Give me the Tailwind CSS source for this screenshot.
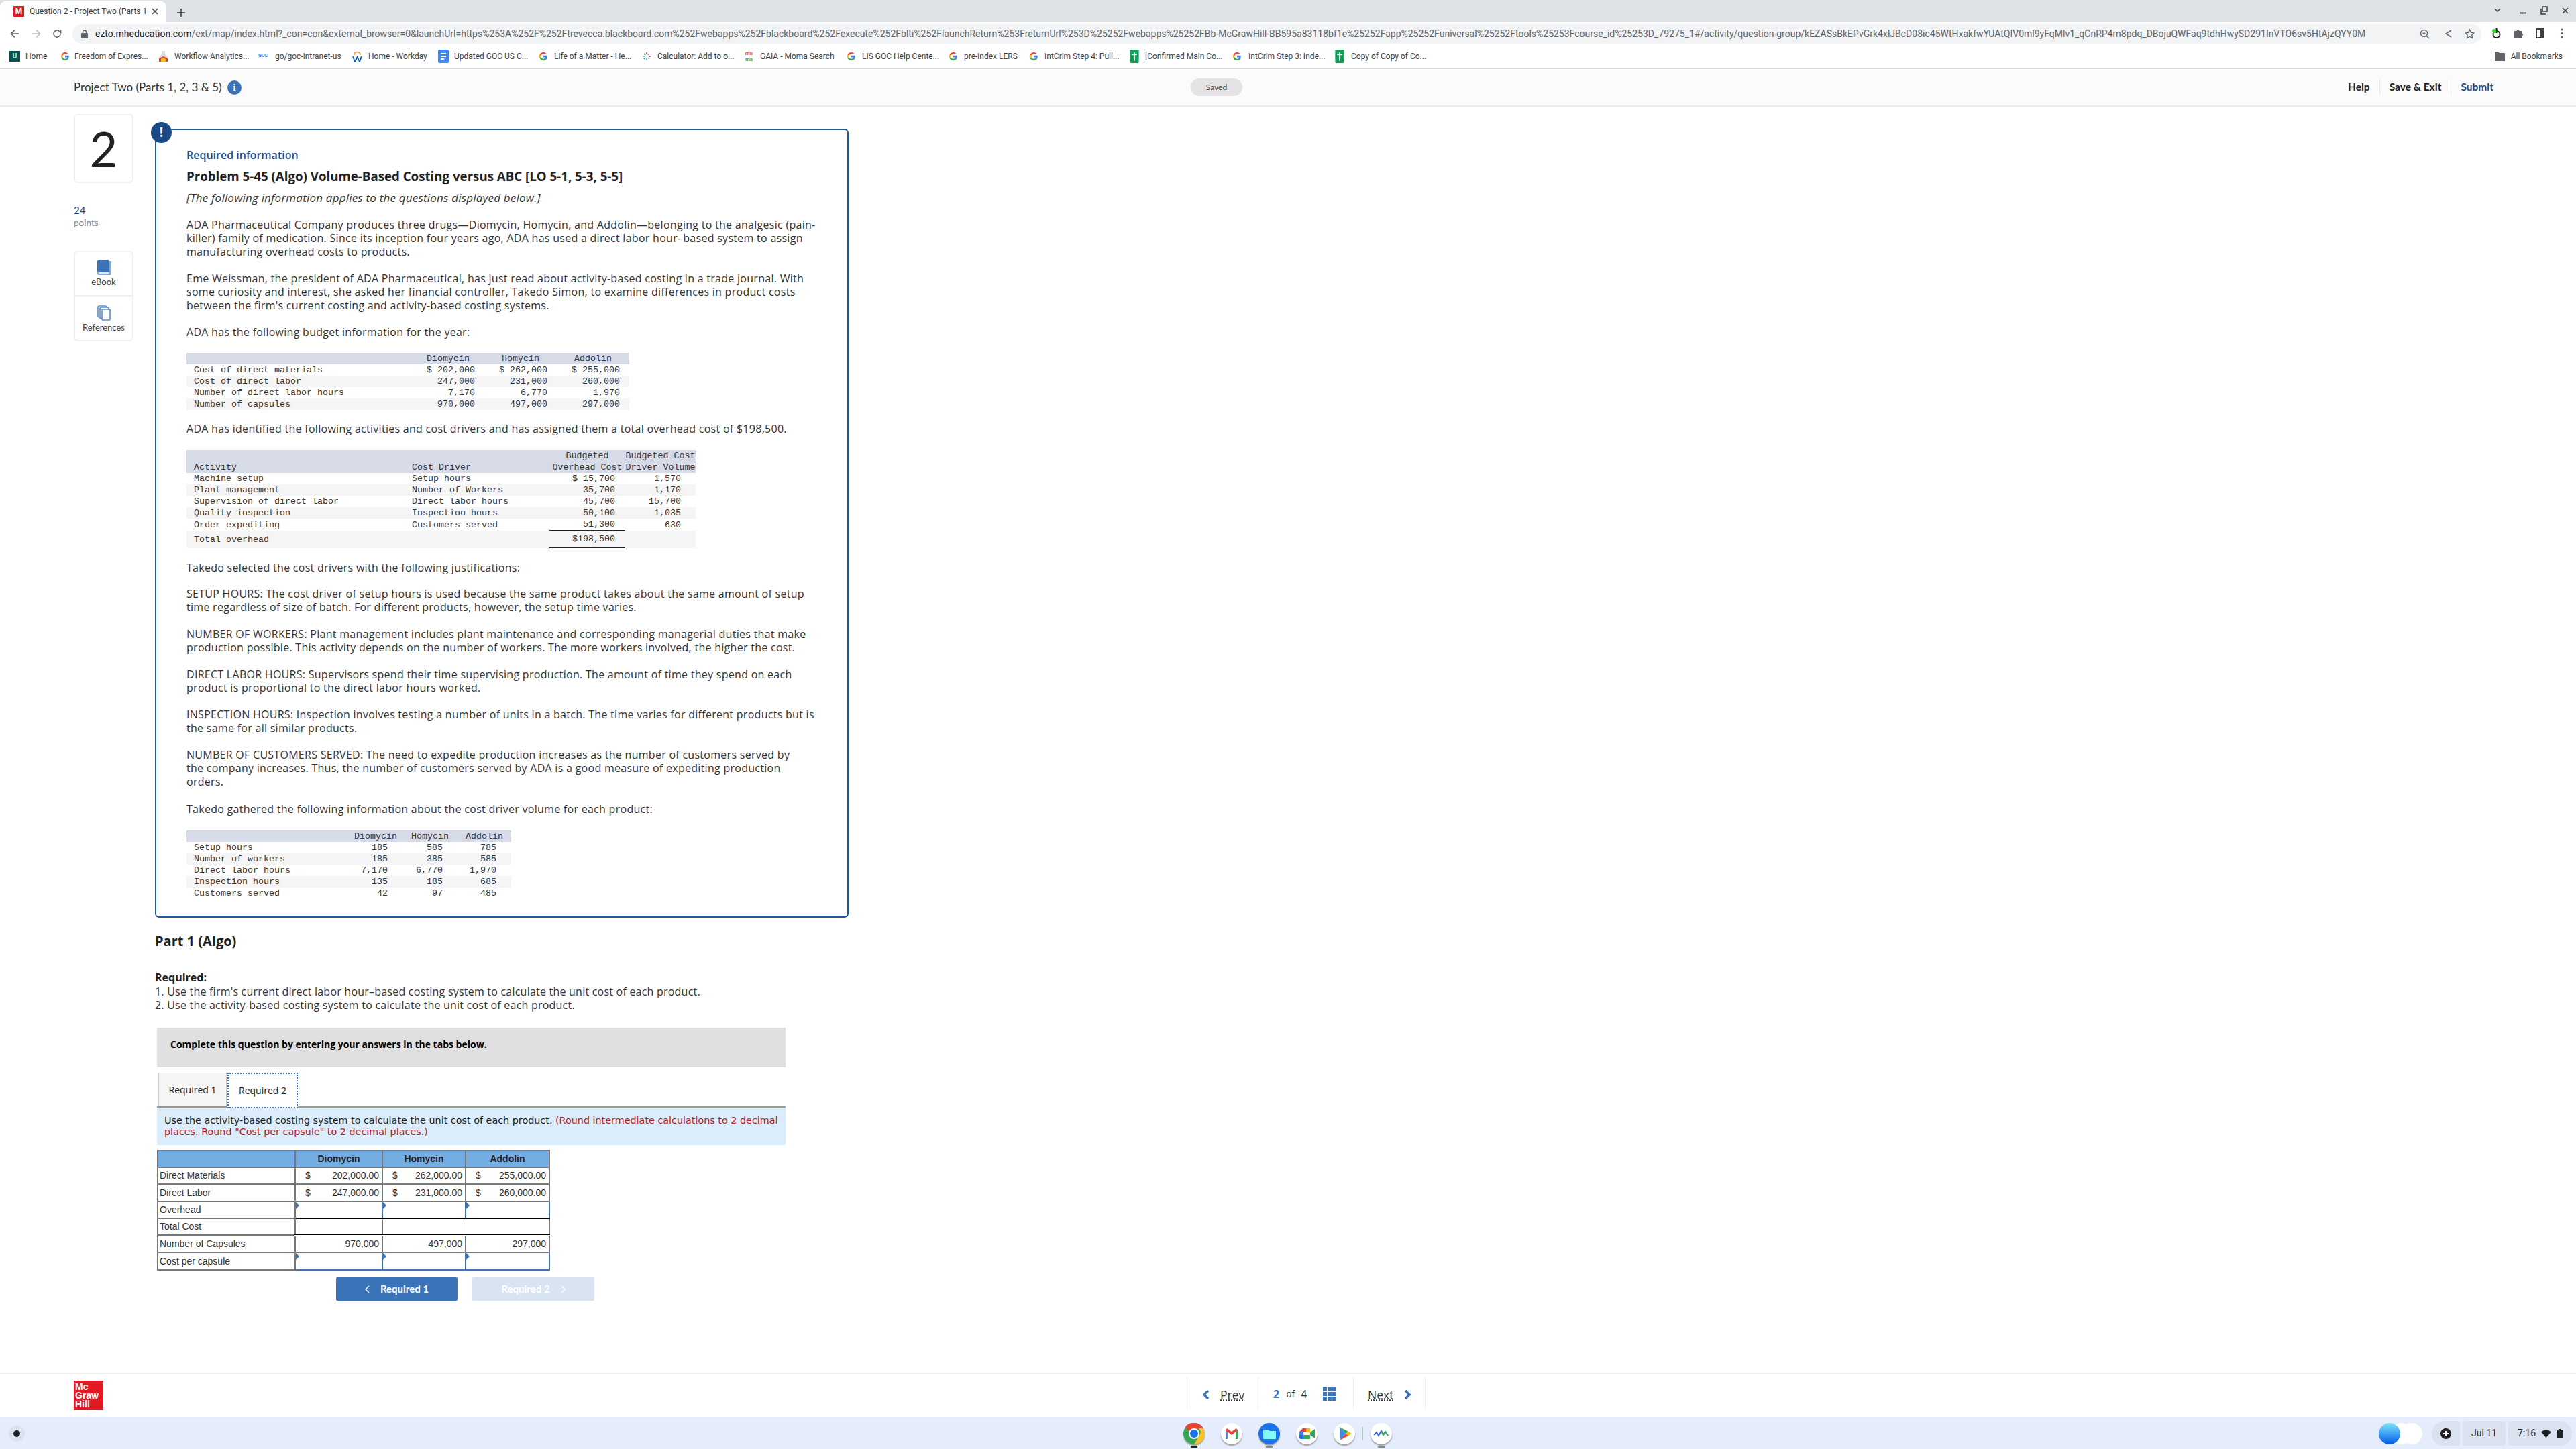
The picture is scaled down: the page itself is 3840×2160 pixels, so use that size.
<!DOCTYPE html>
<html lang="en">
<head>
<meta charset="UTF-8">
<title>Question 2 - Project Two (Parts 1, 2, 3 &amp; 5)</title>
<script src="https://cdn.jsdelivr.net/npm/@tailwindcss/browser@4"></script>
</head>
<body class="bg-white font-['Roboto',sans-serif] text-[#333]">
<svg class="hidden">
  <symbol id="g" viewBox="0 0 16 16">
    <path d="M14.6 8.2c0-.5 0-1-.1-1.5H8v2.9h3.7c-.2.9-.7 1.7-1.4 2.2l2.3 1.8c1.3-1.3 2-3.1 2-5.4z" fill="#4285f4"/>
    <path d="M8 15c1.9 0 3.5-.6 4.6-1.7l-2.3-1.8c-.6.4-1.4.7-2.3.7-1.8 0-3.3-1.2-3.9-2.9L1.7 11.2C2.9 13.5 5.3 15 8 15z" fill="#34a853"/>
    <path d="M4.1 9.3C3.8 8.5 3.8 7.500 4.100 6.700L1.700 4.800c-1 1.900-1 4.500 0 6.400z" fill="#fbbc05"/>
    <path d="M8 3.800c1 0 1.900.4 2.600 1l2-2C11.400 1.700 9.800 1 8 1 5.300 1 2.900 2.500 1.700 4.800l2.400 1.900C4.700 5 6.200 3.800 8 3.800z" fill="#ea4335"/>
  </symbol>
  <symbol id="sheet" viewBox="0 0 16 24">
    <rect width="16" height="24" rx="2" fill="#0f9d58"/>
    <path d="M7 5h2v15H7zM3.500 8h9v2h-9z" fill="#fff"/>
  </symbol>
</svg>

<div class="w-[3840px] h-[2160px] flex flex-col overflow-hidden">

  <!-- tab strip -->
  <div class="h-[33px] bg-[#dee1e6] flex items-end relative">
    <div class="w-[248px] h-[32px] bg-white rounded-t-[10px] flex items-center pl-[20px]">
      <span class="w-[16px] h-[16px] bg-[#e21a23] text-white text-[13px] leading-[16px] font-bold text-center font-['Liberation_Sans',sans-serif]">M</span>
      <span class="ml-[8px] w-[176px] whitespace-nowrap text-[12px] text-[#3c4043]">Question 2 - Project Two (Parts 1</span>
      <svg class="ml-[6px]" width="10" height="10" viewBox="0 0 10 10"><path d="M1 1l8 8M9 1l-8 8" stroke="#3c4043" stroke-width="1.500"/></svg>
    </div>
    <svg class="ml-[16px] mb-[8px]" width="12" height="12" viewBox="0 0 12 12"><path d="M6 0v12M0 6h12" stroke="#3c4043" stroke-width="1.600"/></svg>
    <div class="ml-auto mr-[11px] mb-[11px] flex items-center gap-[21px]">
      <svg width="10" height="7" viewBox="0 0 10 7"><path d="M1 1l4 4 4-4" fill="none" stroke="#3c4043" stroke-width="1.500"/></svg>
      <svg class="ml-[7px]" width="10" height="10" viewBox="0 0 10 10"><path d="M0 8.500h10" stroke="#3c4043" stroke-width="2"/></svg>
      <svg width="11" height="13" viewBox="0 0 11 13"><path d="M3 1h7v7H3zM1 4v8h7" fill="none" stroke="#3c4043" stroke-width="1.500"/></svg>
      <svg width="10" height="10" viewBox="0 0 10 10"><path d="M1 1l8 8M9 1l-8 8" stroke="#3c4043" stroke-width="1.500"/></svg>
    </div>
  </div>

  <!-- address bar -->
  <div class="h-[33px] bg-white flex items-center relative">
    <svg class="ml-[15px]" width="14" height="14" viewBox="0 0 14 14"><path d="M13 7H2M7 1.500L1.500 7 7 12.500" fill="none" stroke="#5f6368" stroke-width="1.700"/></svg>
    <svg class="ml-[18px]" width="14" height="14" viewBox="0 0 14 14"><path d="M1 7h11M7 1.500L12.500 7 7 12.500" fill="none" stroke="#bdc1c6" stroke-width="1.700"/></svg>
    <svg class="ml-[17px]" width="14" height="14" viewBox="0 0 14 14"><path d="M12 7a5 5 0 1 1-1.500-3.500L12.500 5.500V1.500" fill="none" stroke="#5f6368" stroke-width="1.600"/></svg>
    <div class="ml-[16px] w-[3591px] shrink-0 h-[29px] mt-[1px] bg-[#f1f3f4] rounded-full flex items-center pl-[13px]">
      <svg width="10" height="13" viewBox="0 0 10 13"><path d="M2.500 5V3.500a2.500 2.500 0 0 1 5 0V5" fill="none" stroke="#5f6368" stroke-width="1.300"/><rect y="5" width="10" height="8" rx="1" fill="#5f6368"/></svg>
      <span class="ml-[11px] w-[3385px] whitespace-nowrap text-[14px] text-[#5f6368]"><span class="text-[#202124]">ezto.mheducation.com</span>/ext/map/index.html?_con=con&amp;external_browser=0&amp;launchUrl=https%253A%252F%252Ftrevecca.blackboard.com%252Fwebapps%252Fblackboard%252Fexecute%252Fblti%252FlaunchReturn%253FreturnUrl%253D%25252Fwebapps%25252FBb-McGrawHill-BB595a83118bf1e%25252Fapp%25252Funiversal%25252Ftools%25253Fcourse_id%25253D_79275_1#/activity/question-group/kEZASsBkEPvGrk4xlJBcD08ic45WtHxakfwYUAtQIV0ml9yFqMlv1_qCnRP4m8pdq_DBojuQWFaq9tdhHwySD291InVTO6sv5HtAjzQYY0M</span>
      <svg class="ml-[80px]" width="15" height="15" viewBox="0 0 15 15"><circle cx="6.500" cy="6.500" r="5" fill="none" stroke="#5f6368" stroke-width="1.300"/><path d="M10 10l4 4M4.500 6.500h4M6.500 4.500v4" stroke="#5f6368" stroke-width="1.300"/></svg>
      <svg class="ml-[21px]" width="14" height="14" viewBox="0 0 14 14"><path d="M11 2L3 7l8 5" fill="none" stroke="#5f6368" stroke-width="1.500"/></svg>
      <svg class="ml-[17px]" width="15" height="15" viewBox="0 0 15 15"><path d="M7.500 1l2 4.300 4.500.6-3.300 3.100.9 4.600-4.100-2.300-4.100 2.300.9-4.600L1 5.900l4.500-.6z" fill="none" stroke="#5f6368" stroke-width="1.300"/></svg>
    </div>
    <svg class="ml-[16px]" width="13" height="17" viewBox="0 0 13 17"><circle cx="6.500" cy="10" r="5" fill="none" stroke="#202124" stroke-width="2"/><path d="M6.500 1v7" stroke="#202124" stroke-width="2"/><circle cx="3" cy="5" r="3" fill="#1fe01f"/></svg>
    <svg class="ml-[19px]" width="14" height="15" viewBox="0 0 14 15"><path d="M1 4h3.500a2 2 0 0 1 4 0H12v3.500a2 2 0 0 1 0 4V14H1z" fill="#5f6368"/></svg>
    <svg class="ml-[19px]" width="12" height="15" viewBox="0 0 12 15"><path d="M1 1h10v13H1z" fill="none" stroke="#3c4043" stroke-width="2"/><path d="M7 1h4v13H7z" fill="#3c4043"/></svg>
    <svg class="ml-[25px]" width="4" height="15" viewBox="0 0 4 15"><circle cx="2" cy="2" r="1.500" fill="#5f6368"/><circle cx="2" cy="7.500" r="1.500" fill="#5f6368"/><circle cx="2" cy="13" r="1.500" fill="#5f6368"/></svg>
  </div>

  <!-- bookmarks bar -->
  <div class="h-[37px] bg-white border-b-2 border-[#dadce0] flex items-center text-[12px] text-[#3c4043] whitespace-nowrap pl-[14px]">
    <div class="flex items-center"><span class="w-[16px] h-[16px] bg-[#0b5152] text-[#9fe] text-[10px] leading-[16px] text-center font-bold">U</span><span class="ml-[8px] w-[32px]">Home</span></div>
    <div class="ml-[20px] flex items-center"><svg width="14" height="16"><use href="#g"/></svg><span class="ml-[7px] w-[108px]">Freedom of Expres...</span></div>
    <div class="ml-[18px] flex items-center"><svg width="13" height="16" viewBox="0 0 13 16"><path d="M4 0h5v5l4 4v7H0V9l4-4z" fill="#dadce0"/><path d="M0 11l6.500-3 6.500 3v5H0z" fill="#ea4335"/><path d="M3 12l3.500-2 3.500 2v4H3z" fill="#fbbc05"/></svg><span class="ml-[10px] w-[110px]">Workflow Analytics...</span></div>
    <div class="ml-[15px] flex items-center"><span class="w-[18px] text-[7px] font-bold text-[#4285f4]">GOC</span><span class="ml-[7px] w-[100px]">go/goc-intranet-us</span></div>
    <div class="ml-[15px] flex items-center"><svg width="15" height="18" viewBox="0 0 15 18"><path d="M3 7a4.500 4.500 0 0 1 9 0" fill="none" stroke="#f6861f" stroke-width="1.600"/><path d="M1 9l3 8 3.500-7 3.500 7 3-8" fill="none" stroke="#0b5fb0" stroke-width="1.800"/></svg><span class="ml-[9px] w-[88px]">Home - Workday</span></div>
    <div class="ml-[16px] flex items-center"><svg width="16" height="20" viewBox="0 0 16 20"><rect width="16" height="20" rx="2" fill="#4285f4"/><path d="M4 6h8M4 10h8M4 14h5" stroke="#fff" stroke-width="1.800"/></svg><span class="ml-[8px] w-[109px]">Updated GOC US C...</span></div>
    <div class="ml-[17px] flex items-center"><svg width="14" height="16"><use href="#g"/></svg><span class="ml-[9px] w-[115px]">Life of a Matter - He...</span></div>
    <div class="ml-[16px] flex items-center"><svg width="14" height="14" viewBox="0 0 14 14"><path d="M7 1v3M7 10v3M1 7h3M10 7h3M3 3l2 2M9 9l2 2M11 3L9 5M5 9l-2 2" stroke="#5fa3d8" stroke-width="1.500"/><path d="M7 1v3M10 7h3" stroke="#ea4335" stroke-width="1.500"/><path d="M3 3l2 2M5 9l-2 2" stroke="#34a853" stroke-width="1.500"/></svg><span class="ml-[9px] w-[112px]">Calculator: Add to o...</span></div>
    <div class="ml-[16px] flex items-center"><span class="w-[17px] text-[8px] leading-[9px] font-bold text-center"><span class="text-[#e0524d]">mo</span><br><span class="text-[#34a853]">ma</span></span><span class="ml-[8px] w-[112px]">GAIA - Moma Search</span></div>
    <div class="ml-[17px] flex items-center"><svg width="14" height="16"><use href="#g"/></svg><span class="ml-[9px] w-[112px]">LIS GOC Help Cente...</span></div>
    <div class="ml-[17px] flex items-center"><svg width="14" height="16"><use href="#g"/></svg><span class="ml-[9px] w-[80px]">pre-index LERS</span></div>
    <div class="ml-[17px] flex items-center"><svg width="14" height="16"><use href="#g"/></svg><span class="ml-[9px] w-[110px]">IntCrim Step 4: Pull...</span></div>
    <div class="ml-[16px] flex items-center"><svg width="16" height="20"><use href="#sheet"/></svg><span class="ml-[8px] w-[114px]">[Confirmed Main Co...</span></div>
    <div class="ml-[16px] flex items-center"><svg width="14" height="16"><use href="#g"/></svg><span class="ml-[10px] w-[113px]">IntCrim Step 3: Inde...</span></div>
    <div class="ml-[15px] flex items-center"><svg width="16" height="20"><use href="#sheet"/></svg><span class="ml-[9px] w-[110px]">Copy of Copy of Co...</span></div>
    <div class="ml-auto mr-[20px] flex items-center"><svg width="15" height="16" viewBox="0 0 15 16"><path d="M0 2a1 1 0 0 1 1-1h4l2 2h7a1 1 0 0 1 1 1v11H0z" fill="#5f6368"/></svg><span class="ml-[9px]">All Bookmarks</span></div>
  </div>

  <!-- assignment header -->
  <div class="h-[56px] bg-[#fbfbfb] border-b-2 border-[#eeeeee] flex items-center relative font-['Lato',sans-serif]">
    <span class="ml-[110px] text-[17px] text-[#333] w-[224px] whitespace-nowrap">Project Two (Parts 1, 2, 3 &amp; 5)</span>
    <span class="ml-[5px] w-[21px] h-[21px] rounded-full bg-[#3b73b9] text-white text-[14px] leading-[21px] text-center font-bold font-['Liberation_Serif',serif]">i</span>
    <span class="ml-[1415px] w-[77px] h-[26px] rounded-full bg-[#e4e2e5] text-[12px] leading-[26px] text-center text-[#444]">Saved</span>
    <div class="ml-auto mr-[123px] flex items-center text-[15.5px] font-bold text-[#222]">
      <span class="pr-[14px] border-r border-[#e8e8e8]">Help</span>
      <span class="px-[14px] border-r border-[#e8e8e8]">Save &amp; Exit</span>
      <span class="pl-[14px] text-[#1c4d8c]">Submit</span>
    </div>
  </div>

  <!-- main -->
  <div class="flex-1 flex pl-[110px] pt-[11px] font-['Open_Sans',sans-serif]">
    <div class="w-[89px] font-['Lato',sans-serif]">
      <div class="h-[103px] border-2 border-[#f0f0f0] rounded-[6px] text-[72px] leading-[99px] text-center text-[#222]">2</div>
      <div class="mt-[30px] text-[15px] leading-[20px] text-[#1c4d8c]">24</div>
      <div class="text-[13.5px] leading-[18px] text-[#888]">points</div>
      <div class="mt-[33px] h-[135px] border-2 border-[#f0f0f0] rounded-[6px] flex flex-col items-center text-[13px] text-[#444]">
        <div class="h-[66px] w-full border-b-2 border-[#f0f0f0] flex flex-col items-center pt-[11px]">
          <svg width="20" height="23" viewBox="0 0 20 23"><path d="M18 2h2v21H3a3 3 0 0 1-3-3z" fill="#80a8dc"/><path d="M0 3a3 3 0 0 1 3-3h14v18H3a3 3 0 0 0-3 2z" fill="#3b73b9"/><path d="M3 20h15" stroke="#fff" stroke-width="1.500"/></svg>
          <span class="leading-[18px] mt-[1px]">eBook</span>
        </div>
        <div class="flex flex-col items-center pt-[13px]">
          <svg width="20" height="23" viewBox="0 0 20 23"><rect x="1" y="1" width="13" height="17" rx="2" fill="#fff" stroke="#5c8fcf" stroke-width="1.600"/><rect x="4" y="3" width="13" height="17" rx="2" fill="#fff" stroke="#5c8fcf" stroke-width="1.600"/><rect x="7" y="6" width="12" height="16" rx="1" fill="#fff" stroke="#5c8fcf" stroke-width="1.600"/></svg>
          <span class="leading-[18px] mt-[1px]">References</span>
        </div>
      </div>
    </div>

    <div class="ml-[32px] w-[1034px] pt-[22px]">
      <!-- required information box -->
      <div class="relative h-[1176px] border-2 border-[#1d5a9b] rounded-[6px] pl-[45px] pt-[27px] text-[16px] tracking-[0.28px] leading-[20px] text-[#333]">
        <span class="absolute left-[-8px] top-[-12px] w-[31px] h-[31px] rounded-full bg-[#1a4a86] text-white text-[19px] leading-[31px] text-center font-bold">!</span>
        <div class="font-semibold tracking-normal text-[#1c4d8c]">Required information</div>
        <h1 class="mt-[12px] text-[18.7px] tracking-normal font-bold text-[#222]">Problem 5-45 (Algo) Volume-Based Costing versus ABC [LO 5-1, 5-3, 5-5]</h1>
        <p class="mt-[12px] italic text-[17px] tracking-[0.2px]">[The following information applies to the questions displayed below.]</p>
        <p class="mt-[20px] w-[985px]">ADA Pharmaceutical Company produces three drugs—Diomycin, Homycin, and Addolin—belonging to the analgesic (pain-<br>killer) family of medication. Since its inception four years ago, ADA has used a direct labor hour–based system to assign<br>manufacturing overhead costs to products.</p>
        <p class="mt-[20px] w-[985px]">Eme Weissman, the president of ADA Pharmaceutical, has just read about activity-based costing in a trade journal. With<br>some curiosity and interest, she asked her financial controller, Takedo Simon, to examine differences in product costs<br>between the firm's current costing and activity-based costing systems.</p>
        <p class="mt-[20px]">ADA has the following budget information for the year:</p>

        <table class="mt-[21px] w-[660px] table-fixed border-collapse font-['Liberation_Mono',monospace] text-[13.33px] tracking-normal leading-[17px] whitespace-pre">
          <colgroup><col class="w-[336px]"><col class="w-[108px]"><col class="w-[108px]"><col class="w-[108px]"></colgroup>
          <tr class="bg-[#d7dbe7]"><td></td><td class="text-center">Diomycin</td><td class="text-center">Homycin</td><td class="text-center">Addolin</td></tr>
          <tr><td class="pl-[11px]">Cost of direct materials</td><td class="text-right pr-[14px]">$ 202,000</td><td class="text-right pr-[14px]">$ 262,000</td><td class="text-right pr-[14px]">$ 255,000</td></tr>
          <tr class="bg-[#f5f5f5]"><td class="pl-[11px]">Cost of direct labor</td><td class="text-right pr-[14px]">247,000</td><td class="text-right pr-[14px]">231,000</td><td class="text-right pr-[14px]">260,000</td></tr>
          <tr><td class="pl-[11px]">Number of direct labor hours</td><td class="text-right pr-[14px]">7,170</td><td class="text-right pr-[14px]">6,770</td><td class="text-right pr-[14px]">1,970</td></tr>
          <tr class="bg-[#f5f5f5]"><td class="pl-[11px]">Number of capsules</td><td class="text-right pr-[14px]">970,000</td><td class="text-right pr-[14px]">497,000</td><td class="text-right pr-[14px]">297,000</td></tr>
        </table>

        <p class="mt-[18px]">ADA has identified the following activities and cost drivers and has assigned them a total overhead cost of $198,500.</p>

        <table class="mt-[22px] w-[759px] table-fixed border-collapse font-['Liberation_Mono',monospace] text-[13.33px] tracking-normal leading-[17px] whitespace-pre">
          <colgroup><col class="w-[336px]"><col class="w-[205px]"><col class="w-[113px]"><col class="w-[105px]"></colgroup>
          <tr class="bg-[#d7dbe7]"><td></td><td></td><td class="text-center">Budgeted</td><td class="text-center">Budgeted Cost</td></tr>
          <tr class="bg-[#d7dbe7]"><td class="pl-[11px]">Activity</td><td>Cost Driver</td><td class="text-center">Overhead Cost</td><td class="text-center">Driver Volume</td></tr>
          <tr><td class="pl-[11px]">Machine setup</td><td>Setup hours</td><td class="text-right pr-[15px]">$ 15,700</td><td class="text-right pr-[22px]">1,570</td></tr>
          <tr class="bg-[#f5f5f5]"><td class="pl-[11px]">Plant management</td><td>Number of Workers</td><td class="text-right pr-[15px]">35,700</td><td class="text-right pr-[22px]">1,170</td></tr>
          <tr><td class="pl-[11px]">Supervision of direct labor</td><td>Direct labor hours</td><td class="text-right pr-[15px]">45,700</td><td class="text-right pr-[22px]">15,700</td></tr>
          <tr class="bg-[#f5f5f5]"><td class="pl-[11px]">Quality inspection</td><td>Inspection hours</td><td class="text-right pr-[15px]">50,100</td><td class="text-right pr-[22px]">1,035</td></tr>
          <tr><td class="pl-[11px]">Order expediting</td><td>Customers served</td><td class="text-right pr-[15px]">51,300</td><td class="text-right pr-[22px]">630</td></tr>
          <tr class="bg-[#f5f5f5] h-[26px]"><td class="pl-[11px]">Total overhead</td><td></td><td class="text-right pr-[15px] border-t-2 border-b-[3px] border-b-[#222] border-double border-t-[#222]">$198,500</td><td></td></tr>
        </table>

        <p class="mt-[17px]">Takedo selected the cost drivers with the following justifications:</p>
        <p class="mt-[19px] w-[985px]">SETUP HOURS: The cost driver of setup hours is used because the same product takes about the same amount of setup<br>time regardless of size of batch. For different products, however, the setup time varies.</p>
        <p class="mt-[20px] w-[985px]">NUMBER OF WORKERS: Plant management includes plant maintenance and corresponding managerial duties that make<br>production possible. This activity depends on the number of workers. The more workers involved, the higher the cost.</p>
        <p class="mt-[20px] w-[985px]">DIRECT LABOR HOURS: Supervisors spend their time supervising production. The amount of time they spend on each<br>product is proportional to the direct labor hours worked.</p>
        <p class="mt-[20px] w-[985px]">INSPECTION HOURS: Inspection involves testing a number of units in a batch. The time varies for different products but is<br>the same for all similar products.</p>
        <p class="mt-[20px] w-[985px]">NUMBER OF CUSTOMERS SERVED: The need to expedite production increases as the number of customers served by<br>the company increases. Thus, the number of customers served by ADA is a good measure of expediting production<br>orders.</p>
        <p class="mt-[21px]">Takedo gathered the following information about the cost driver volume for each product:</p>

        <table class="mt-[22px] w-[484px] table-fixed border-collapse font-['Liberation_Mono',monospace] text-[13.33px] tracking-normal leading-[17px] whitespace-pre">
          <colgroup><col class="w-[242px]"><col class="w-[80px]"><col class="w-[82px]"><col class="w-[80px]"></colgroup>
          <tr class="bg-[#d7dbe7]"><td></td><td class="text-center">Diomycin</td><td class="text-center">Homycin</td><td class="text-center">Addolin</td></tr>
          <tr><td class="pl-[11px]">Setup hours</td><td class="text-right pr-[22px]">185</td><td class="text-right pr-[22px]">585</td><td class="text-right pr-[22px]">785</td></tr>
          <tr class="bg-[#f5f5f5]"><td class="pl-[11px]">Number of workers</td><td class="text-right pr-[22px]">185</td><td class="text-right pr-[22px]">385</td><td class="text-right pr-[22px]">585</td></tr>
          <tr><td class="pl-[11px]">Direct labor hours</td><td class="text-right pr-[22px]">7,170</td><td class="text-right pr-[22px]">6,770</td><td class="text-right pr-[22px]">1,970</td></tr>
          <tr class="bg-[#f5f5f5]"><td class="pl-[11px]">Inspection hours</td><td class="text-right pr-[22px]">135</td><td class="text-right pr-[22px]">185</td><td class="text-right pr-[22px]">685</td></tr>
          <tr><td class="pl-[11px]">Customers served</td><td class="text-right pr-[22px]">42</td><td class="text-right pr-[22px]">97</td><td class="text-right pr-[22px]">485</td></tr>
        </table>
      </div>

      <h2 class="mt-[23px] text-[20px] leading-[24px] font-bold text-[#222]">Part 1 (Algo)</h2>
      <div class="mt-[32px] text-[16px] leading-[20px] font-bold text-[#222]">Required:</div>
      <div class="mt-[1px] text-[16px] tracking-[0.22px] leading-[20px] text-[#333]">1. Use the firm's current direct labor hour–based costing system to calculate the unit cost of each product.</div>
      <div class="text-[16px] tracking-[0.22px] leading-[20px] text-[#333]">2. Use the activity-based costing system to calculate the unit cost of each product.</div>

      <div class="mt-[24px] ml-[3px] w-[937px] h-[59px] bg-[#e0e0e0] pl-[20px] pt-[15px] text-[14px] leading-[20px] font-bold text-black">Complete this question by entering your answers in the tabs below.</div>

      <!-- tabs -->
      <div class="mt-[8px] ml-[3px] w-[937px] h-[52px] flex items-stretch border-b-2 border-[#999] text-[14px] text-[#222]">
        <div class="ml-[2px] w-[102px] bg-[#f5f5f5] border border-b-0 border-[#ccc] flex items-center justify-center">Required 1</div>
        <div class="ml-[1px] w-[105px] h-[53px] bg-white border-2 border-dotted border-[#3b73b9] flex items-center justify-center">Required 2</div>
      </div>
      <div class="ml-[3px] w-[937px] h-[56px] bg-[#dbecfa] pl-[11px] pt-[11px] text-[14.35px] leading-[17px] text-[#222] font-['DejaVu_Sans',sans-serif] whitespace-nowrap">Use the activity-based costing system to calculate the unit cost of each product. <span class="text-[#b51c24]">(Round intermediate calculations to 2 decimal<br>places. Round "Cost per capsule" to 2 decimal places.)</span></div>

      <!-- answer table -->
      <table class="mt-[7px] ml-[3px] w-[584px] table-fixed border-collapse border-2 border-[#777] font-['Liberation_Sans',sans-serif] text-[14px] text-[#333]">
        <colgroup><col class="w-[205px]"><col class="w-[130px]"><col class="w-[124px]"><col class="w-[125px]"></colgroup>
        <tr class="h-[25px] bg-[#74ade4] font-bold text-[#222] text-center"><td class="border-2 border-[#777]"></td><td class="border-2 border-[#777]">Diomycin</td><td class="border-2 border-[#777]">Homycin</td><td class="border-2 border-[#777]">Addolin</td></tr>
        <tr class="h-[25px]"><td class="border-2 border-[#777] pl-[2px]">Direct Materials</td>
          <td class="border-2 border-[#777] pl-[14px] pr-[4px]"><div class="flex justify-between"><span>$</span><span>202,000.00</span></div></td>
          <td class="border-2 border-[#777] pl-[14px] pr-[4px]"><div class="flex justify-between"><span>$</span><span>262,000.00</span></div></td>
          <td class="border-2 border-[#777] pl-[14px] pr-[4px]"><div class="flex justify-between"><span>$</span><span>255,000.00</span></div></td></tr>
        <tr class="h-[26px]"><td class="border-2 border-[#777] pl-[2px]">Direct Labor</td>
          <td class="border-2 border-[#777] pl-[14px] pr-[4px]"><div class="flex justify-between"><span>$</span><span>247,000.00</span></div></td>
          <td class="border-2 border-[#777] pl-[14px] pr-[4px]"><div class="flex justify-between"><span>$</span><span>231,000.00</span></div></td>
          <td class="border-2 border-[#777] pl-[14px] pr-[4px]"><div class="flex justify-between"><span>$</span><span>260,000.00</span></div></td></tr>
        <tr class="h-[25px]"><td class="border-2 border-[#777] pl-[2px]">Overhead</td>
          <td class="relative border-2 border-[#3b73b9] border-b-black"><span class="absolute left-0 top-0 w-0 h-0 border-y-[5px] border-l-[5px] border-y-transparent border-l-[#3b73b9]"></span></td>
          <td class="relative border-2 border-[#3b73b9] border-b-black"><span class="absolute left-0 top-0 w-0 h-0 border-y-[5px] border-l-[5px] border-y-transparent border-l-[#3b73b9]"></span></td>
          <td class="relative border-2 border-[#3b73b9] border-b-black"><span class="absolute left-0 top-0 w-0 h-0 border-y-[5px] border-l-[5px] border-y-transparent border-l-[#3b73b9]"></span></td></tr>
        <tr class="h-[25px]"><td class="border-2 border-[#777] pl-[2px]">Total Cost</td>
          <td class="border border-[#777] border-t-black border-b-[3px] border-double border-b-black"></td>
          <td class="border border-[#777] border-t-black border-b-[3px] border-double border-b-black"></td>
          <td class="border border-[#777] border-t-black border-b-[3px] border-double border-b-black"></td></tr>
        <tr class="h-[26px]"><td class="border-2 border-[#777] pl-[2px]">Number of Capsules</td>
          <td class="border-2 border-[#777] text-right pr-[4px]">970,000</td>
          <td class="border-2 border-[#777] text-right pr-[4px]">497,000</td>
          <td class="border-2 border-[#777] text-right pr-[4px]">297,000</td></tr>
        <tr class="h-[26px]"><td class="border-2 border-[#777] pl-[2px]">Cost per capsule</td>
          <td class="relative border-2 border-[#3b73b9]"><span class="absolute left-0 top-0 w-0 h-0 border-y-[5px] border-l-[5px] border-y-transparent border-l-[#3b73b9]"></span></td>
          <td class="relative border-2 border-[#3b73b9]"><span class="absolute left-0 top-0 w-0 h-0 border-y-[5px] border-l-[5px] border-y-transparent border-l-[#3b73b9]"></span></td>
          <td class="relative border-2 border-[#3b73b9]"><span class="absolute left-0 top-0 w-0 h-0 border-y-[5px] border-l-[5px] border-y-transparent border-l-[#3b73b9]"></span></td></tr>
      </table>

      <div class="mt-[10px] ml-[270px] flex gap-[22px] text-[15px] font-bold text-white font-['Lato',sans-serif]">
        <div class="w-[181px] h-[35px] bg-[#3b73b9] rounded-[2px] flex items-center justify-center gap-[16px]">
          <svg width="7" height="12" viewBox="0 0 7 12"><path d="M6 1L1 6l5 5" fill="none" stroke="#fff" stroke-width="1.500"/></svg>
          <span>Required 1</span>
        </div>
        <div class="w-[182px] h-[35px] bg-[#d8e4f2] rounded-[2px] flex items-center justify-center gap-[16px]">
          <span>Required 2</span>
          <svg width="7" height="12" viewBox="0 0 7 12"><path d="M1 1l5 5-5 5" fill="none" stroke="#fff" stroke-width="1.500"/></svg>
        </div>
      </div>
    </div>
  </div>

  <!-- footer -->
  <div class="h-[66px] bg-white border-t-2 border-[#f0f0f0] flex items-start relative font-['Open_Sans',sans-serif]">
    <div class="ml-[110px] mt-[10px] w-[44px] h-[44px] bg-[#e21a23] text-white text-[14px] leading-[13px] font-bold pl-[2px] pt-[3px] font-['Liberation_Sans',sans-serif]">Mc<br>Graw<br>Hill</div>
    <div class="ml-[1615px] mt-[5px] h-[49px] flex items-center text-[16px] text-[#333]">
      <div class="w-[107px] h-full border-x border-[#eeeeee] flex items-center pl-[22px] pt-[3px]">
        <svg width="11" height="16" viewBox="0 0 11 16"><path d="M9 2L3 8l6 6" fill="none" stroke="#3b73b9" stroke-width="3.500"/></svg>
        <span class="ml-[16px] text-[17.5px] underline decoration-dotted">Prev</span>
      </div>
      <div class="w-[142px] h-full border-r border-[#eeeeee] flex items-center pl-[22px]">
        <span class="font-bold text-[#3b73b9]">2</span><span class="ml-[10px] text-[14px]">of</span><span class="ml-[9px]">4</span>
        <svg class="ml-[24px]" width="20" height="20" viewBox="0 0 20 20"><path d="M0 0h6v6H0zM7 0h6v6H7zM14 0h6v6h-6zM0 7h6v6H0zM7 7h6v6H7zM14 7h6v6h-6zM0 14h6v6H0zM7 14h6v6H7zM14 14h6v6h-6z" fill="#3b73b9"/></svg>
      </div>
      <div class="w-[107px] h-full border-r border-[#eeeeee] flex items-center pl-[21px] pt-[3px]">
        <span class="text-[17.5px] underline decoration-dotted">Next</span>
        <svg class="ml-[16px]" width="11" height="16" viewBox="0 0 11 16"><path d="M2 2l6 6-6 6" fill="none" stroke="#3b73b9" stroke-width="3.500"/></svg>
      </div>
    </div>
  </div>

  <!-- shelf -->
  <div class="h-[48px] bg-[#e5ecfb] border-t border-[#d5dceb] flex items-center relative">
    <span class="ml-[13px] w-[24px] h-[24px] rounded-full bg-[#dbe2ef] flex items-center justify-center"><span class="w-[10px] h-[10px] rounded-full bg-[#202124]"></span></span>
    <div class="ml-[1727px] flex items-center gap-[24px]">
      <div class="relative w-[32px] h-[32px] rounded-full shadow-[0_2px_2px_#999]">
        <svg width="32" height="32" viewBox="0 0 32 32"><circle cx="16" cy="16" r="16" fill="#34a853"/><path d="M16 0a16 16 0 0 1 13.900 8H16a8 8 0 0 0-7.500 5L3 5.500A16 16 0 0 1 16 0z" fill="#ea4335"/><path d="M30 8a16 16 0 0 1-14 24l7-12a8 8 0 0 0 0-12z" fill="#fbc02d"/><circle cx="16" cy="16" r="8" fill="#fff"/><circle cx="16" cy="16" r="6" fill="#1a73e8"/></svg>
        <span class="absolute left-[11px] top-[35px] w-[10px] h-[2px] bg-[#202124]"></span>
      </div>
      <div class="w-[32px] h-[32px] rounded-full bg-white shadow-[0_2px_2px_#999]">
        <svg width="32" height="32" viewBox="0 0 32 32"><path d="M7 24V11l3-2v15z" fill="#4285f4"/><path d="M22 24V9l3 2v13z" fill="#34a853"/><path d="M7 11l9 7 9-7-2-3-7 5-7-5z" fill="#ea4335"/></svg>
      </div>
      <div class="relative w-[32px] h-[32px] rounded-full bg-[#1a73e8] shadow-[0_2px_2px_#999]">
        <svg width="32" height="32" viewBox="0 0 32 32"><path d="M7 10h8l2 2h9v12H7z" fill="#84f7f7"/></svg>
        <span class="absolute left-[11px] top-[35px] w-[10px] h-[2px] bg-[#888]"></span>
      </div>
      <div class="w-[32px] h-[32px] rounded-full bg-white shadow-[0_2px_2px_#999]">
        <svg width="32" height="32" viewBox="0 0 32 32"><path d="M5 13l5-5h11v6H11v4H5z" fill="#ea4335"/><path d="M5 18h6v6H7a2 2 0 0 1-2-2z" fill="#1a73e8"/><path d="M21 8v6h-6V8z" fill="#fbbc05"/><path d="M11 18v6h10v-6z" fill="#34a853"/><path d="M21 14l7-5v14l-7-5z" fill="#34a853"/><path d="M5 13h6v5H5z" fill="#4285f4"/><path d="M11 14h10v4H11z" fill="#fff"/></svg>
      </div>
      <div class="w-[32px] h-[32px] rounded-full bg-white shadow-[0_2px_2px_#999]">
        <svg width="32" height="32" viewBox="0 0 32 32"><path d="M9 6l9 10-9 10z" fill="#4285f4"/><path d="M9 6l13 7-4 3z" fill="#34a853"/><path d="M9 26l13-7-4-3z" fill="#ea4335"/><path d="M22 13l5 3-5 3-4-3z" fill="#fbbc05"/></svg>
      </div>
      <span class="w-px h-[20px] bg-[#b8bfd0] mx-[-13px]"></span>
      <div class="relative w-[32px] h-[32px] rounded-full bg-white shadow-[0_2px_2px_#999]">
        <svg width="32" height="32" viewBox="0 0 32 32"><path d="M5 18l4-4 3 5 4-7 3 6 3-5 4 6" fill="none" stroke="#3b63e8" stroke-width="2"/><path d="M16 12l3 6 3-5 4 6" fill="none" stroke="#34a853" stroke-width="2"/></svg>
        <span class="absolute left-[11px] top-[35px] w-[10px] h-[2px] bg-[#888]"></span>
      </div>
    </div>
    <div class="ml-auto mr-[6px] flex items-center gap-[4px] text-[14px] text-[#202124]">
      <div class="relative w-[66px] h-[32px] mr-[9px]">
        <span class="absolute left-[33px] top-0 w-[32px] h-[32px] rounded-full bg-white"></span>
        <span class="absolute left-[17px] top-0 w-[32px] h-[32px] rounded-full bg-white"></span>
        <span class="absolute left-0 top-0 w-[32px] h-[32px] rounded-full bg-linear-to-b from-[#7fe3f8] to-[#0058e6]"></span>
      </div>
      <div class="w-[42px] h-[36px] bg-[#dbe2ef] rounded-l-[18px] rounded-r-[4px] flex items-center justify-center">
        <svg width="16" height="16" viewBox="0 0 16 16"><circle cx="8" cy="8" r="8" fill="#202124"/><path d="M8 4v8M4 8h8" stroke="#fff" stroke-width="2"/></svg>
      </div>
      <div class="w-[64px] h-[36px] bg-[#dbe2ef] rounded-[4px] flex items-center justify-center">Jul 11</div>
      <div class="w-[95px] h-[36px] bg-[#dbe2ef] rounded-l-[4px] rounded-r-[18px] flex items-center justify-center gap-[8px]">
        <span>7:16</span>
        <svg width="15" height="12" viewBox="0 0 15 12"><path d="M0 3.500a11 11 0 0 1 15 0L7.500 12z" fill="#202124"/></svg>
        <svg width="9" height="14" viewBox="0 0 9 14"><path d="M3 0h3v2h3v12H0V2h3z" fill="#202124"/></svg>
      </div>
    </div>
  </div>
</div>
</body>
</html>
